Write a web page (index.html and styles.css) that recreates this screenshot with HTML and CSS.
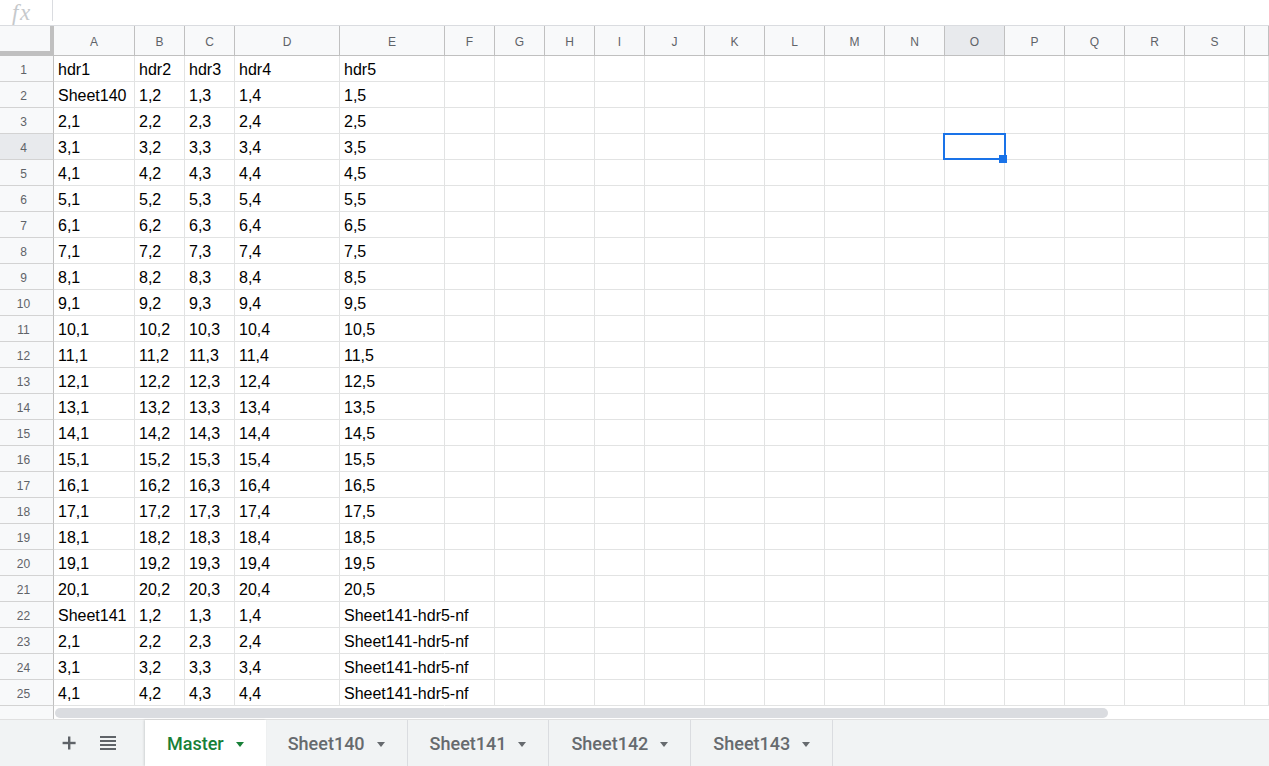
FILE: index.html
```html
<!DOCTYPE html>
<html lang="en">
<head>
<meta charset="utf-8">
<title>Spreadsheet</title>
<link rel="stylesheet" href="styles.css">
</head>
<body>
<div class="app">
  <div class="formula-bar">
    <span class="fx">fx</span>
    <span class="fx-sep"></span>
    <span class="fx-input"></span>
  </div>
  <div class="grid" id="grid"></div>
  <div class="hscroll">
    <div class="hscroll-gutter"></div>
    <div class="hscroll-track"><div class="hscroll-thumb"></div></div>
  </div>
  <div class="tabbar">
    <div class="tab-tools">
      <span class="tool-btn">
        <svg width="14" height="14" viewBox="0 0 14 14"><rect x="6" y="0.5" width="2.4" height="13" fill="#5f6368"/><rect x="0.6" y="5.8" width="13" height="2.4" fill="#5f6368"/></svg>
      </span>
      <span class="tool-btn">
        <svg width="16" height="16" viewBox="0 0 16 16"><rect x="0" y="1" width="16" height="2" fill="#5f6368"/><rect x="0" y="5" width="16" height="2" fill="#5f6368"/><rect x="0" y="9" width="16" height="2" fill="#5f6368"/><rect x="0" y="13" width="16" height="2" fill="#5f6368"/></svg>
      </span>
    </div>
    <div class="tab tab-active"><span class="tab-name">Master</span><span class="tab-caret"></span></div>
    <div class="tab"><span class="tab-name">Sheet140</span><span class="tab-caret"></span></div>
    <div class="tab"><span class="tab-name">Sheet141</span><span class="tab-caret"></span></div>
    <div class="tab"><span class="tab-name">Sheet142</span><span class="tab-caret"></span></div>
    <div class="tab"><span class="tab-name">Sheet143</span><span class="tab-caret"></span></div>
  </div>
</div>
<script src="app.js"></script>
</body>
</html>
```

FILE: styles.css
```css
* { box-sizing: border-box; }
html, body { margin: 0; padding: 0; }
body {
  width: 1269px;
  height: 766px;
  overflow: hidden;
  background: #fff;
  font-family: "Liberation Sans", Arial, sans-serif;
  color: #000;
}
.app { display: flex; flex-direction: column; width: 1269px; height: 766px; }

/* formula bar */
.formula-bar {
  height: 26px;
  flex: none;
  display: flex;
  align-items: flex-start;
  border-bottom: 1px solid #dadce0;
}
.fx {
  font-family: "Liberation Serif", "DejaVu Serif", serif;
  font-style: italic;
  font-size: 23px;
  line-height: 26px;
  height: 25px;
  color: #c6c9cc;
  width: 52px;
  padding-left: 12px;
  letter-spacing: 1.5px;
}
.fx-sep { width: 1px; height: 21px; background: #dadce0; }
.fx-input { flex: 1; }

/* grid */
.grid {
  flex: none;
  display: grid;
  grid-template-columns: 54px 81px 50px 50px 105px 105px 50px 50px 50px 50px repeat(10, 60px) 1fr;
  grid-template-rows: 30px repeat(25, 26px);
}
.cell {
  border-right: 1px solid #e2e3e3;
  border-bottom: 1px solid #e2e3e3;
  font-size: 16px;
  line-height: 18px;
  padding: 0 4px 2px 4px;
  display: flex;
  align-items: flex-end;
  white-space: nowrap;
  position: relative;
}
.cell.spill { border-right-color: transparent; z-index: 1; }
.corner {
  background: #f8f9fa;
  border-right: 4px solid #c0c0c0;
  border-bottom: 5px solid #c0c0c0;
}
.col-head {
  background: #f8f9fa;
  border-right: 1px solid #c0c0c0;
  border-bottom: 1px solid #c0c0c0;
  font-size: 12px;
  color: #5f6368;
  display: flex;
  align-items: center;
  justify-content: center;
  padding-top: 3px;
}
.row-head {
  background: #f8f9fa;
  border-right: 1px solid #c0c0c0;
  border-bottom: 1px solid #d3d3d3;
  font-size: 12px;
  color: #5f6368;
  display: flex;
  align-items: center;
  justify-content: center;
  padding: 3px 6px 0 0;
}
.col-head.active, .row-head.active { background: #e8eaed; }
.sel-box {
  position: absolute;
  left: -2px; top: -1px; right: -2px; bottom: -1px;
  border: 2px solid #1a73e8;
}
.sel-handle {
  position: absolute;
  width: 8px; height: 8px;
  right: -3px; bottom: -4px;
  background: #1a73e8;
  z-index: 2;
}

/* horizontal scrollbar */
.hscroll {
  height: 14px;
  flex: none;
  display: flex;
  border-bottom: 1px solid #e0e0e0;
}
.hscroll-gutter { width: 54px; background: #f8f9fa; border-right: 1px solid #c0c0c0; }
.hscroll-track { flex: 1; padding: 2px 0 1px 1px; }
.hscroll-thumb { width: 1053px; height: 10px; background: #dadce0; border-radius: 5px; }

/* sheet tabs */
.tabbar {
  flex: 1;
  display: flex;
  background: #f1f3f4;
}
.tab-tools {
  width: 145px;
  display: flex;
  align-items: center;
  padding-left: 62px;
  gap: 24px;
}
.tool-btn { display: flex; align-items: center; height: 16px; }
.tab {
  display: flex;
  align-items: center;
  gap: 12px;
  padding: 1px 22px 0 22px;
  border-right: 1px solid #dadce0;
  font-family: Roboto, "Liberation Sans", sans-serif;
  font-weight: 500;
  font-size: 18px;
  color: #666a6e;
}
.tab-caret {
  width: 0; height: 0;
  border-left: 4.5px solid transparent;
  border-right: 4.5px solid transparent;
  border-top: 5px solid #666a6e;
  margin-top: 1px;
}
.tab-active {
  background: #fff;
  color: #188038;
  border-right: none;
  box-shadow: -1px 0 2px rgba(60, 64, 67, 0.18);
}
.tab-active .tab-caret { border-top-color: #188038; }
```

FILE: app.js
```js
(function () {
  var grid = document.getElementById('grid');
  var letters = 'ABCDEFGHIJKLMNOPQRST'.split('');
  function el(cls, text) {
    var d = document.createElement('div');
    d.className = cls;
    if (text) d.textContent = text;
    grid.appendChild(d);
    return d;
  }
  el('corner');
  letters.forEach(function (l) {
    el('col-head' + (l === 'O' ? ' active' : ''), l === 'T' ? '' : l);
  });
  function rowData(r) {
    if (r === 1) return ['hdr1', 'hdr2', 'hdr3', 'hdr4', 'hdr5'];
    if (r === 2) return ['Sheet140', '1,2', '1,3', '1,4', '1,5'];
    if (r <= 21) { var i = r - 1; return [i + ',1', i + ',2', i + ',3', i + ',4', i + ',5']; }
    if (r === 22) return ['Sheet141', '1,2', '1,3', '1,4', 'Sheet141-hdr5-nf'];
    var j = r - 21;
    return [j + ',1', j + ',2', j + ',3', j + ',4', 'Sheet141-hdr5-nf'];
  }
  for (var r = 1; r <= 25; r++) {
    el('row-head' + (r === 4 ? ' active' : ''), String(r));
    var data = rowData(r);
    for (var c = 0; c < letters.length; c++) {
      var txt = c < 5 ? data[c] : '';
      var spill = (c === 4 && r >= 22);
      var cell = el('cell' + (spill ? ' spill' : ''), txt);
      if (r === 4 && letters[c] === 'O') {
        var b = document.createElement('div'); b.className = 'sel-box'; cell.appendChild(b);
        var h = document.createElement('div'); h.className = 'sel-handle'; cell.appendChild(h);
      }
    }
  }
})();
```
